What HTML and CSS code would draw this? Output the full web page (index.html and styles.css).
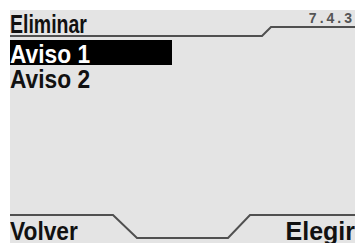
FILE: index.html
```html
<!DOCTYPE html>
<html lang="es">
<head>
  <meta charset="UTF-8" />
  <title>Eliminar</title>
  <link rel="stylesheet" href="styles.css">
</head>
<body>

  <div class="screen">
    <div class="header">
      <span class="title">Eliminar</span>
      <span class="version">7.4.3</span>
      <svg class="rule" width="345" height="30" viewBox="0 0 345 30">
        <polyline points="0,26 252,26 261,17 345,17" />
      </svg>
    </div>

    <ul class="list">
      <li class="item selected"><span class="label">Aviso 1</span></li>
      <li class="item"><span class="label">Aviso 2</span></li>
    </ul>

    <div class="softkeys">
      <svg class="rule" width="345" height="30" viewBox="0 0 345 30">
        <polyline points="0,2 103,2 127,25 218,25 240,2 345,2" />
      </svg>
      <span class="label">Volver</span>
      <span class="label right">Elegir</span>
    </div>
  </div>

</body>
</html>
```

FILE: styles.css
```css
body { margin: 0; background: #fff; font-family: "Liberation Sans", Arial, sans-serif; font-weight: bold; color: #111; }
.screen { margin: 10px 0 0 10px; width: 345px; height: 233px; background: #e4e4e4; display: flex; flex-direction: column; overflow: hidden; }

.rule { position: absolute; left: 0; top: 0; }
.rule polyline { fill: none; stroke: #505050; stroke-width: 2; }

.header { position: relative; height: 30px; display: flex; justify-content: space-between; align-items: flex-start; }
.title { display: inline-block; margin-top: 2px; font-size: 25px; line-height: 25px; transform: scaleX(.78); transform-origin: left; }
.version { margin-top: 1px; font-size: 14px; line-height: 14px; letter-spacing: 3px; color: #555; }

.list { list-style: none; margin: 0; padding: 0; }
.item { width: 162px; height: 25px; box-sizing: border-box; padding-top: 4px; font-size: 25px; line-height: 21px; }
.item.selected { background: #000; color: #fff; }

.label { display: inline-block; transform: scaleX(.91); transform-origin: left; white-space: nowrap; }

.softkeys { position: relative; margin-top: auto; height: 30px; padding-top: 6px; box-sizing: border-box; display: flex; justify-content: space-between; font-size: 25px; line-height: 24px; }
.softkeys .right { transform: none; }
```
